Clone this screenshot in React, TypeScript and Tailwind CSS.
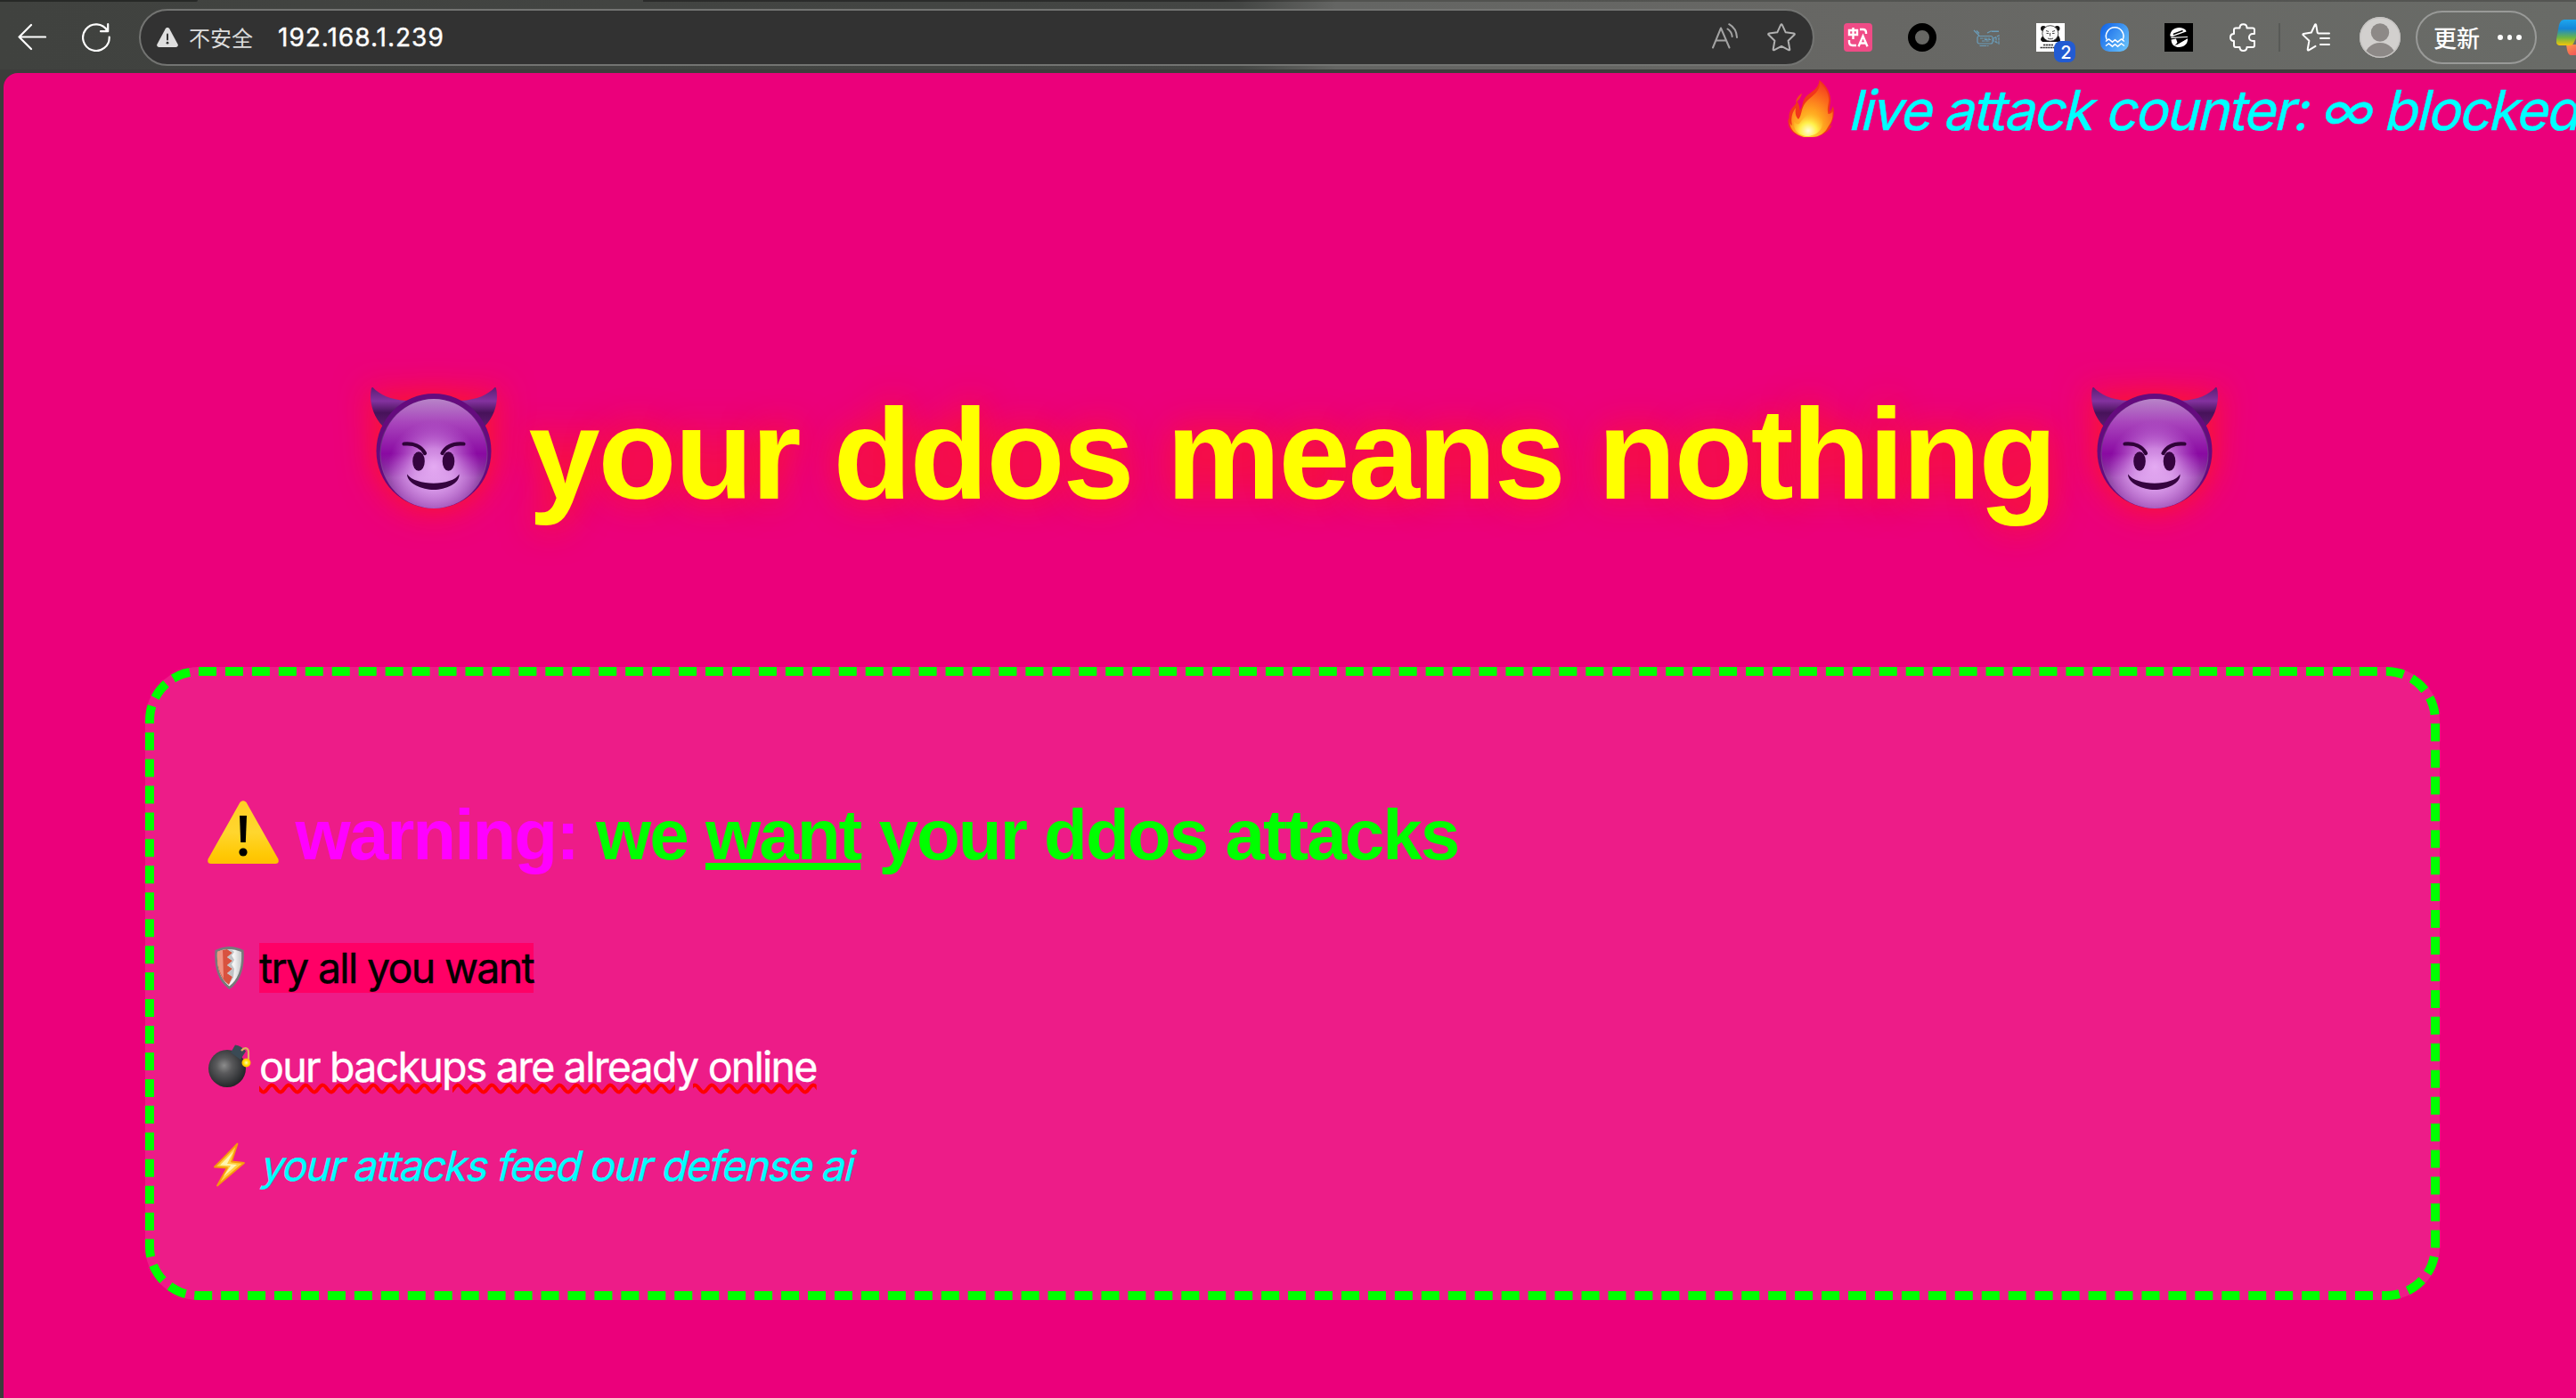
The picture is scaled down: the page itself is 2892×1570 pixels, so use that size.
import type { ReactNode } from 'react';

function BackIcon() {
  return (
    <svg className="h-8 w-8 shrink-0" viewBox="0 0 32 32" fill="none" stroke="#fff" strokeWidth="2.2" strokeLinecap="round" strokeLinejoin="round">
      <path d="M31 15.5H1.5M15 2 1.5 15.5 15 29" />
    </svg>
  );
}

function ReloadIcon() {
  return (
    <svg className="ml-10 h-8 w-8 shrink-0" viewBox="0 0 32 32" fill="none" stroke="#fff" strokeWidth="2.2" strokeLinecap="round" strokeLinejoin="round">
      <path d="M30.7 15.5A14.8 14.8 0 1 1 28.6 8.6M29.2 1.2V9.2H21" />
    </svg>
  );
}

function InsecureIcon() {
  return (
    <svg className="h-6 w-6 shrink-0" viewBox="0 0 24 24">
      <path d="M12 1c1 0 1.700.5 2.200 1.300l9.300 17.200c.9 1.700-.2 3.500-2.100 3.500H2.600C.7 23-.4 21.200.500 19.500L9.800 2.300C10.300 1.500 11 1 12 1Z" fill="#dfdfdf" />
      <path d="M12 8.500v6" stroke="#333" strokeWidth="2" strokeLinecap="round" />
      <circle cx="12" cy="18.200" r="1.400" fill="#333" />
    </svg>
  );
}

function ReadAloudIcon() {
  return (
    <svg className="ml-auto h-8 w-8 shrink-0" viewBox="0 0 32 32" fill="none" stroke="#a3a3a3" strokeWidth="2" strokeLinecap="round" strokeLinejoin="round">
      <path d="M2 27.500 11 5.500 20.500 27.500M5.300 19.500H17.200M18.500 6.500c2.800 1.800 4.700 4.900 5.200 8.500M20.200 1.200c5 2.800 8.400 8.400 8.800 14.700" />
    </svg>
  );
}

function StarIcon() {
  return (
    <svg className="ml-[31px] h-8 w-8 shrink-0" viewBox="0 0 32 32" fill="none" stroke="#b0b0b0" strokeWidth="2" strokeLinejoin="round">
      <path d="M15.200 1.900q.8-1.300 1.600 0l3.900 8.400 9.200 1.300q1.500.3.600 1.400l-6.900 6.700 1.700 9.500q.1 1.500-1.300 1L16 25.900l-8 4.300q-1.400.5-1.300-1l1.700-9.500-6.900-6.700q-.9-1.100.6-1.400l9.200-1.300Z" />
    </svg>
  );
}

function TranslateIcon() {
  return (
    <svg className="ml-[33px] h-8 w-8 shrink-0" viewBox="0 0 32 32" fill="none">
      <rect width="32" height="32" rx="4" fill="#ef4b86" />
      <g stroke="#fff" strokeWidth="2.400">
        <path d="M6 8h9v5H6ZM10.500 5v13" />
        <path d="M18 7h3.500c2.500 0 3.500 1.200 3.500 3.500V12M6 19v2c0 2.500 1.300 4 3.800 4H14" />
        <path d="M16.500 26.200 21.500 14.500 26.500 26.200M18.300 22.500h6.400" />
      </g>
    </svg>
  );
}

function CameraIcon() {
  return (
    <svg className="ml-10 h-8 w-8 shrink-0" viewBox="0 0 32 32" fill="none" stroke="#6a9dba" strokeWidth="1.200">
      <path d="M2 8l6 6M5 8.500l3 3M17 11l4-2h9M22 9.500h8" />
      <rect x="6" y="14.500" width="17" height="8.500" rx="2" />
      <path d="M9 17h11M11 20h9M14 18.500h7M24 17l6-3v9l-6-3ZM27 16v6M8.500 25.500h10M12 25.500h4" strokeDasharray="3.500 .8" />
    </svg>
  );
}

function PandaIcon() {
  return (
    <div className="relative ml-10 h-8 w-8 shrink-0">
      <svg className="h-8 w-8" viewBox="0 0 32 32">
        <rect width="32" height="32" fill="#fff" />
        <path d="M5 19c0-3 2-4 3-5l16-1c2 2 3 4 3 8H7Z" fill="#111" />
        <circle cx="8" cy="6" r="3" fill="#111" />
        <circle cx="23.500" cy="6" r="3" fill="#111" />
        <ellipse cx="15.800" cy="11.500" rx="9" ry="8.800" fill="#f8f8f8" stroke="#222" strokeWidth=".8" />
        <path d="M11 8.500l3 1M18 9.500l3-1M11.500 11.500h2.500M18 11.500h2.500M15.500 11v3.500M13 17c2 1 4 1 6 0" stroke="#333" strokeWidth=".9" fill="none" />
        <path d="M8 24.500h11M4.500 27.500h17" stroke="#333" strokeWidth="1.600" strokeDasharray="2.400 .5" />
      </svg>
      <div className="absolute left-5 top-5 flex h-6 w-6 items-center justify-center rounded-lg bg-[#225bd2] pl-[3px] pt-0.5 font-['Inter'] text-[20px] font-medium leading-none text-white">2</div>
    </div>
  );
}

function WaveIcon() {
  return (
    <svg className="ml-10 h-8 w-8 shrink-0" viewBox="0 0 32 32" fill="none">
      <defs>
        <linearGradient id="sea" x1="0" y1="0" x2="1" y2=".7">
          <stop offset="0" stopColor="#0e5fe6" />
          <stop offset="1" stopColor="#62bcfb" />
        </linearGradient>
      </defs>
      <rect width="32" height="32" rx="10" fill="url(#sea)" />
      <path d="M7.200 18.500a9.800 9.800 0 1 1 18 0M6 20.500l3.500-2.500 4 3.200 3-2.500 3 2.500 4-3.200 3.500 2.500M6 25.500l3.500-2.500 4 3.200 3-2.500 3 2.500 4-3.200 3.500 2.500" stroke="#fff" strokeWidth="1.500" />
    </svg>
  );
}

function SlashBallIcon() {
  return (
    <svg className="ml-10 h-8 w-8 shrink-0" viewBox="0 0 32 32">
      <rect width="32" height="32" fill="#000" />
      <path d="M6.200 14.200C6.500 8.500 11 4.800 17 5c4 .3 7 2 7.500 4.500L8.500 15.200Z" fill="#fff" />
      <path d="M10.500 12.300 20 8.800" stroke="#000" strokeWidth="1.600" strokeLinecap="round" />
      <path d="M26 17.200C26.500 23 22 27 16 27c-2 0-4-.7-5-1.500ZM6.500 15.800l19.500-.9v1.200l-18 .8ZM7.500 18.500c.3 3.500 1.500 6 3.500 7L14.500 22 13 17.500Z" fill="#fff" />
      <path d="M14 23.500 23 18" stroke="#000" strokeWidth="1.400" strokeLinecap="round" />
    </svg>
  );
}

function PuzzleIcon() {
  return (
    <svg className="ml-10 h-8 w-8 shrink-0" viewBox="0 0 32 32" fill="none" stroke="#fff" strokeWidth="2" strokeLinejoin="round">
      <path d="M8 5.500h4.500C12.500 2.500 14.300 1.200 16.500 1.200S20.500 2.500 20.500 5.500H27q2 0 2 2V12H27c-2.300 0-4 1.700-4 4s1.700 4 4 4h2v5q0 2-2 2h-6.500c0 2.700-1.700 4-4 4s-4-1.300-4-4H8q-2 0-2-2V20C3.300 20 2 18.300 2 16s1.300-4 4-4V7.500q0-2 2-2Z" />
    </svg>
  );
}

function FavoritesIcon() {
  return (
    <svg className="ml-6 h-8 w-8 shrink-0" viewBox="0 0 32 32" fill="none" stroke="#fff" strokeWidth="2" strokeLinecap="round" strokeLinejoin="round">
      <path d="M21 11.500h-2.200q-.8 0-1.100-.8L16.200 2q-.7-1.300-1.400 0l-3.900 8.500-8.800 1.500q-1.300.4-.4 1.400l6.700 6.400-1.700 9.700q0 1.400 1.300.9l7.500-4.500M21 17h10M21 24h10M21 11.500h10" />
    </svg>
  );
}

function Avatar() {
  return (
    <svg className="ml-[33px] h-[46px] w-[46px] shrink-0" viewBox="0 0 46 46">
      <defs>
        <clipPath id="face"><circle cx="23" cy="23" r="23" /></clipPath>
      </defs>
      <g clipPath="url(#face)">
        <rect width="46" height="46" fill="#d2d0ce" />
        <circle cx="23" cy="17.500" r="10.200" fill="#8d8987" />
        <circle cx="23" cy="47" r="18" fill="#8d8987" />
      </g>
      <circle cx="23" cy="23" r="22.300" fill="none" stroke="#c4c2c0" strokeWidth="1.400" />
    </svg>
  );
}

function CopilotIcon() {
  return (
    <svg className="ml-[22px] h-10 w-[46px] shrink-0" viewBox="0 0 46 40">
      <defs>
        <linearGradient id="cpA" x1="0" y1="0" x2="0" y2="1">
          <stop offset="0" stopColor="#1ea7ee" />
          <stop offset=".35" stopColor="#1486d8" />
          <stop offset=".7" stopColor="#6cb544" />
          <stop offset="1" stopColor="#f5c60a" />
        </linearGradient>
        <linearGradient id="cpB" x1="0" y1="0" x2="1" y2="1">
          <stop offset="0" stopColor="#ff9a4a" />
          <stop offset="1" stopColor="#ee3f5c" />
        </linearGradient>
      </defs>
      <path d="M11 28h20l-5 12h-9c-3 0-4-2-5-6Z" fill="url(#cpB)" />
      <path d="M9 0h22L20 25c-1 3-3 4-6 4H5c-4 0-6-2-5-7L3 6C4 2 6 0 9 0Z" fill="url(#cpA)" />
    </svg>
  );
}

function Toolbar() {
  return (
    <header className="flex h-[78px] items-center overflow-hidden bg-[linear-gradient(90deg,#40423f_0px,#444644_1390px,#646563_1500px,#676764_2100px,#696b67_2892px)] pl-5 pt-1.5">
      <BackIcon />
      <ReloadIcon />
      <div className="ml-8 flex h-16 w-[1881px] shrink-0 items-center rounded-full border-2 border-[#737472] bg-[#323232] pl-[18px] pr-[19px]">
        <InsecureIcon />
        <span className="ml-3 whitespace-nowrap font-['Noto_Sans_CJK_SC',sans-serif] text-[24px] leading-8 text-[#dcdcdc]">不安全</span>
        <span className="ml-7 whitespace-nowrap font-['Inter',sans-serif] text-[28px] leading-8 tracking-[1px] text-white [-webkit-text-stroke:0.4px]">192.168.1.239</span>
        <ReadAloudIcon />
        <StarIcon />
      </div>
      <TranslateIcon />
      <div className="ml-10 h-8 w-8 shrink-0 rounded-full border-8 border-black" />
      <CameraIcon />
      <PandaIcon />
      <WaveIcon />
      <SlashBallIcon />
      <PuzzleIcon />
      <div className="ml-6 h-8 w-0.5 shrink-0 bg-[#585a57]" />
      <FavoritesIcon />
      <Avatar />
      <div className="ml-[17px] flex h-[60px] w-[136px] shrink-0 items-center rounded-full border-2 border-[#999a98] pl-[18px]">
        <span className="whitespace-nowrap font-['Noto_Sans_CJK_SC',sans-serif] text-[26px] font-medium leading-8 text-white">更新</span>
        <div className="ml-5 flex gap-[5px]">
          <i className="h-[5.500px] w-[5.500px] rounded-full bg-white" />
          <i className="h-[5.500px] w-[5.500px] rounded-full bg-white" />
          <i className="h-[5.500px] w-[5.500px] rounded-full bg-white" />
        </div>
      </div>
      <CopilotIcon />
    </header>
  );
}

function Fire() {
  return (
    <svg className="mt-[5px] h-16 w-[52px] shrink-0" viewBox="0 0 52 64">
      <defs>
        <radialGradient id="fireOuter" cx=".45" cy=".85" r=".85">
          <stop offset="0" stopColor="#ffe23a" />
          <stop offset=".4" stopColor="#ffa51f" />
          <stop offset=".75" stopColor="#fb6a1c" />
          <stop offset="1" stopColor="#f4431f" />
        </radialGradient>
        <radialGradient id="fireInner" cx=".5" cy=".8" r=".65">
          <stop offset="0" stopColor="#fffbd8" />
          <stop offset=".45" stopColor="#fff04a" />
          <stop offset="1" stopColor="#ffb224" stopOpacity=".1" />
        </radialGradient>
      </defs>
      <path d="M18 64C8 62 1 56 .5 47c-.3-2 .2-3 1-4C1 36 4 32 8 28c1.500-2 2-3 2-5 3 4 3.500 8 3.500 11C18 30 15 23 22 17 30 11 35 8 35.500 0c7 5 13 14 12.500 23-.2 5-1.500 8-1 12 1.800-1 3-3 4-6C53 38 51 46 47 52c1.500-.5 2.500-1.500 3-2.500C48 57 37 64 27 64Z" fill="#f2361a" />
      <path d="M18 64C9 61 2 56 2.500 46c.2 3 1 4 2.500 5C3 43 5 36 9 31c-1 6 0 10 3 13 5-6 2-14 11-22C31 15 36 12 36 3c6 5 11 13 10 21-.6 5-2 9-.5 14 2 0 4-1 5-3C51 44 49 47 45 53c-3 6-9 11-18 11Z" fill="url(#fireOuter)" />
      <path d="M20 63C10 61 6 55 7 46c2 3 4 4 6 3 4-7 12-12 19-17-1 7 3 10 7 11 2 10-4 20-19 20Z" fill="url(#fireInner)" />
      <path d="M9 25c1-5 3-8 7-10-1 4-3 7-7 10Z" fill="#f2481c" />
    </svg>
  );
}

function Devil({ id }: { id: string }) {
  return (
    <svg className="mt-1 h-[136px] w-[142px] shrink-0 overflow-visible drop-shadow-[0_0_20px_#ff1a1a]" viewBox="0 0 142 136">
      <defs>
        <linearGradient id={id + 'horn'} x1="0" y1="0" x2="0" y2="1">
          <stop offset="0" stopColor="#5a1f74" />
          <stop offset=".35" stopColor="#84329f" />
          <stop offset=".65" stopColor="#47125a" />
          <stop offset="1" stopColor="#5c1b70" />
        </linearGradient>
        <radialGradient id={id + 'skin'} cx=".5" cy=".62" r=".56">
          <stop offset="0" stopColor="#e3a8f0" />
          <stop offset=".35" stopColor="#d292e2" />
          <stop offset=".7" stopColor="#a455b8" />
          <stop offset="1" stopColor="#62307a" />
        </radialGradient>
        <linearGradient id={id + 'top'} x1="0" y1="0" x2="0" y2="1">
          <stop offset="0" stopColor="#b884c8" />
          <stop offset=".22" stopColor="#a844bc" />
          <stop offset=".5" stopColor="#8a0aa2" />
          <stop offset=".72" stopColor="#8400a0" stopOpacity="0" />
        </linearGradient>
        <radialGradient id={id + 'glow'} cx=".5" cy=".62" r=".42">
          <stop offset="0" stopColor="#e4aaf2" />
          <stop offset=".4" stopColor="#dca0ec" stopOpacity=".8" />
          <stop offset="1" stopColor="#c070d8" stopOpacity="0" />
        </radialGradient>
      </defs>
      <path d="M2.500 0C10 8 22 14 41 15L14 44C2 32-2 14 1 1Q1.500-.3 2.500 0Z" fill={'url(#' + id + 'horn)'} />
      <path d="M139.500 0C132 8 120 14 101 15L128 44C140 32 144 14 141 1Q140.500-.3 139.500 0Z" fill={'url(#' + id + 'horn)'} />
      <circle cx="71" cy="71.500" r="64.500" fill="#650b7e" />
      <ellipse cx="71" cy="74.500" rx="60.500" ry="61.500" fill={'url(#' + id + 'skin)'} />
      <ellipse cx="71" cy="74.500" rx="59.500" ry="61.500" fill={'url(#' + id + 'top)'} />
      <ellipse cx="71" cy="74.500" rx="60.500" ry="61.500" fill={'url(#' + id + 'glow)'} />
      <g fill="#35043f">
        <ellipse cx="54" cy="83" rx="6.800" ry="10.800" />
        <ellipse cx="87.500" cy="83" rx="6.800" ry="10.800" />
        <path d="M41 97.500C50 111 92 111 99.500 97.500 100.500 108 84 115 71 115S41 108 41 97.500Z" />
      </g>
      <path d="M37.500 63.500C48 62.500 57 66 61 74M104.500 63.500C94 62.500 85 66 80.500 74" fill="none" stroke="#2f0338" strokeWidth="4.200" strokeLinecap="round" />
    </svg>
  );
}

function WarningSign() {
  return (
    <svg className="mt-1.5 h-[71px] w-20 shrink-0" viewBox="0 0 80 71">
      <defs>
        <linearGradient id="amber" x1="0" y1="0" x2="0" y2="1">
          <stop offset="0" stopColor="#ffcf24" />
          <stop offset=".5" stopColor="#ffd62e" />
          <stop offset=".85" stopColor="#ffc905" />
          <stop offset="1" stopColor="#ffc000" />
        </linearGradient>
      </defs>
      <path d="M36.500 2Q40-1.500 43.500 2L79.300 65.500Q81 71 76 71H4Q-1 71 .7 65.500Z" fill="url(#amber)" />
      <path d="M36 17h8l-1.200 30h-5.600Z" fill="#000" />
      <circle cx="40" cy="58" r="4.600" fill="#000" />
    </svg>
  );
}

function Shield() {
  return (
    <svg className="h-14 w-[59px] shrink-0" viewBox="0 0 59 56">
      <defs>
        <linearGradient id="steel" x1="0" y1="0" x2="1" y2="0">
          <stop offset="0" stopColor="#ffffff" />
          <stop offset=".7" stopColor="#f4f4f4" />
          <stop offset="1" stopColor="#c4c7c9" />
        </linearGradient>
      </defs>
      <path d="M8.500 8Q24 0 40.500 8C42 28 37 43 24.500 52 12 43 7 28 8.500 8Z" fill="#77797b" />
      <path d="M11 10Q24 4 38 10C39 27 35 40 24.500 48.500 14 40 10 27 11 10Z" fill="url(#steel)" />
      <path d="M11 10Q16 7.500 22 7l6 4-6 5 6 4-6 5 6 4-6 5 6 4-4 9C14 40 10 27 11 10Z" fill="#d8523f" />
      <path d="M11 10q3-1.500 6-2.300L18 40C12 31 10.500 21 11 10Z" fill="#f5a294" opacity=".8" />
      <path d="M22 7l6 4-6 5 6 4-6 5 6 4-6 5 6 4-3.500 8 4.500-7 1-10-3-5 3-5-3-5 3-4Q27 6.500 22 7Z" fill="#a9aeb2" opacity=".7" />
    </svg>
  );
}

function Bomb() {
  return (
    <svg className="h-14 w-[59px] shrink-0" viewBox="0 0 59 56">
      <defs>
        <radialGradient id="iron" cx=".42" cy=".42" r=".6">
          <stop offset="0" stopColor="#8c8c8c" />
          <stop offset=".35" stopColor="#5a5a5c" />
          <stop offset="1" stopColor="#222528" />
        </radialGradient>
        <radialGradient id="spark">
          <stop offset="0" stopColor="#fffbb0" />
          <stop offset=".6" stopColor="#ffe000" />
          <stop offset="1" stopColor="#ffae00" />
        </radialGradient>
      </defs>
      <ellipse cx="22" cy="30" rx="21" ry="21" fill="url(#iron)" />
      <path d="M26 12 31 3.500q7 1 12 7L37 20Z" fill="#3a4a55" />
      <path d="M38 10c4-5 8-3 8 2v9" fill="none" stroke="#e0b060" strokeWidth="2.200" />
      <circle cx="43.500" cy="23.500" r="5" fill="url(#spark)" />
    </svg>
  );
}

function Bolt() {
  return (
    <svg className="h-14 w-[59px] shrink-0" viewBox="0 0 59 56">
      <path d="M33.500 3.500 8 29.500 22 30.500 11 50.500 41 25 27 23.500Z" fill="#ffd040" stroke="#f79a0c" strokeWidth="1.800" strokeLinejoin="round" />
      <path d="M29 12 14 27.500 26 28 18 40 33 27 22 26Z" fill="#fff5b0" />
    </svg>
  );
}

function Row({ icon, children }: { icon: ReactNode; children: ReactNode }) {
  return (
    <p className="mt-[55px] flex h-14 items-start whitespace-nowrap font-['Inter',sans-serif] text-[46.500px] leading-[56px]">
      {icon}
      {children}
    </p>
  );
}

export default function App() {
  return (
    <div className="flex h-[1570px] w-[2892px] flex-col overflow-hidden bg-[#3c3d3b]">
      <div className="relative">
        <Toolbar />
        <div className="absolute left-0 top-0 flex h-0.5 w-full">
          <div className="w-[222px] rounded-br bg-[#272927]" />
          <div className="w-[500px]" />
          <div className="flex-1 bg-[linear-gradient(90deg,#2b2c2b_0px,#2b2c2b_650px,#51524f_780px,#545552_2170px)]" />
        </div>
      </div>
      <main className="ml-1 mt-1 flex-1 overflow-hidden rounded-tl-2xl bg-[#eb007b]">
        <div className="flex h-[79px] items-start overflow-hidden pl-[2003px] pt-[3px]">
          <Fire />
          <span className="ml-[15px] mt-px origin-[0_60px] -skew-x-[13.5deg] whitespace-nowrap font-['Inter',sans-serif] text-[62px] leading-[76px] tracking-[-2.080px] text-[#00ffff] [-webkit-text-stroke:0.5px]">live attack counter: ∞ blocked</span>
        </div>
        <h1 className="mt-[270px] flex h-40 items-start whitespace-nowrap pl-[411.500px] font-['Liberation_Sans',sans-serif] text-[144px] font-bold leading-[160px] tracking-[-2px] text-[#ffff00]">
          <Devil id="a" />
          <span className="ml-9 mr-10 [text-shadow:0_0_40px_#ff1a1a]">your ddos means nothing</span>
          <Devil id="b" />
        </h1>
        <section className="ml-[159px] mt-[158px] h-[711px] w-[2576px] rounded-[60px] border-[10px] border-dashed border-[#00ff00] bg-[#ed1c88] pl-[60px] pt-[134px]">
          <h2 className="flex h-[90px] items-start whitespace-nowrap font-['Liberation_Sans',sans-serif] text-[80px] font-bold leading-[90px] tracking-[-2px] text-[#00ff00]">
            <WarningSign />
            <span className="ml-[18.500px]">
              <span className="text-[#ff00ff]">warning:</span> we{' '}
              <span className="underline decoration-[8px] underline-offset-[4px]">want</span> your ddos attacks
            </span>
          </h2>
          <div className="-mt-0.5 pt-[23px]">
            <Row icon={<Shield />}>
              <span className="-ml-px bg-[#ff0066] tracking-[-1.680px] text-black [-webkit-text-stroke:0.4px]">try all you want</span>
            </Row>
            <Row icon={<Bomb />}>
              <span className="-ml-px tracking-[-1.740px] text-white underline decoration-[#ff0000] decoration-wavy decoration-[4px] [-webkit-text-stroke:0.4px]">our backups are already online</span>
            </Row>
            <Row icon={<Bolt />}>
              <span className="-ml-px origin-[0_45px] -skew-x-[13.5deg] tracking-[-1.370px] text-[#00ffff] [-webkit-text-stroke:0.4px]">your attacks feed our defense ai</span>
            </Row>
          </div>
        </section>
      </main>
    </div>
  );
}
